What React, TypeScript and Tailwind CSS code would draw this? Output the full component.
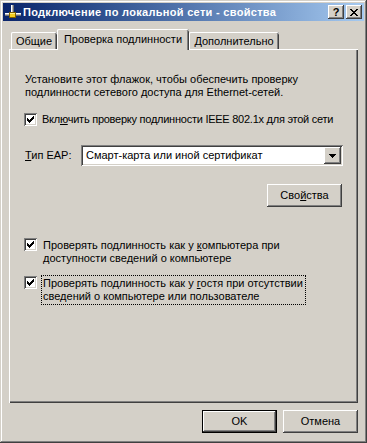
import React from 'react';

const raised =
  'shadow-[inset_-1px_-1px_#404040,inset_1px_1px_#ffffff,inset_-2px_-2px_#808080,inset_2px_2px_#d4d0c8]';
const sunken =
  'shadow-[inset_1px_1px_#808080,inset_-1px_-1px_#ffffff,inset_2px_2px_#404040,inset_-2px_-2px_#d4d0c8]';

function CheckBox() {
  return (
    <div className={`w-[13px] h-[13px] bg-white shrink-0 flex items-center justify-center ${sunken}`}>
      <svg width="7" height="7" viewBox="0 0 7 7" shapeRendering="crispEdges">
        <path
          d="M6 0h1v1H6z M5 1h2v1H5z M0 2h1v1H0z M4 2h3v1H4z M0 3h2v1H0z M3 3h3v1H3z M0 4h5v1H0z M1 5h3v1H1z M2 6h1v1H2z"
          fill="#000"
        />
      </svg>
    </div>
  );
}

function NetIcon() {
  return (
    <svg width="16" height="16" viewBox="0 0 16 16" shapeRendering="crispEdges">
      <rect x="6" y="1" width="3" height="8" fill="#b8b8b8" />
      <rect x="6" y="1" width="1" height="8" fill="#ffffff" />
      <rect x="8" y="1" width="1" height="8" fill="#707070" />
      <rect x="0" y="9" width="16" height="3" fill="#b8b8b8" />
      <rect x="0" y="9" width="16" height="1" fill="#ffffff" />
      <rect x="0" y="11" width="16" height="1" fill="#707070" />
      <rect x="4" y="8" width="7" height="6" fill="#806000" />
      <rect x="5" y="9" width="5" height="4" fill="#f8d020" />
      <rect x="5" y="9" width="5" height="1" fill="#fff080" />
    </svg>
  );
}

function TitleButton({ children }: { children: React.ReactNode }) {
  return (
    <div className={`w-[16px] h-[14px] bg-[#d4d0c8] flex items-center justify-center ${raised}`}>
      {children}
    </div>
  );
}

function Button({ label, isDefault }: { label: React.ReactNode; isDefault?: boolean }) {
  return isDefault ? (
    <div className="w-[75px] h-[23px] border border-black bg-[#d4d0c8]">
      <div className={`w-full h-full flex items-center justify-center ${raised}`}>{label}</div>
    </div>
  ) : (
    <div className={`w-[75px] h-[23px] bg-[#d4d0c8] flex items-center justify-center ${raised}`}>{label}</div>
  );
}

export default function App() {
  return (
    <div
      className={`w-[367px] h-[443px] bg-[#d4d0c8] p-[3px] flex flex-col text-[11px] leading-[13px] text-black font-['Liberation_Sans',Arial,sans-serif] shadow-[inset_-1px_-1px_#404040,inset_1px_1px_#d4d0c8,inset_-2px_-2px_#808080,inset_2px_2px_#ffffff]`}
    >
      {/* title bar */}
      <div className="h-[18px] flex items-center bg-gradient-to-r from-[#0a246a] to-[#a6caf0] pl-[2px] pr-[2px]">
        <NetIcon />
        <div className="ml-[2px] text-white font-bold text-[11px] tracking-[0.3px] flex-1 whitespace-nowrap">
          Подключение по локальной сети - свойства
        </div>
        <div className="flex gap-[2px]">
          <TitleButton>
            <span className="font-bold text-[11px] leading-[11px] mt-[1px]">?</span>
          </TitleButton>
          <TitleButton>
            <svg width="8" height="7" viewBox="0 0 8 7" shapeRendering="crispEdges">
              <path
                d="M0 0h2v1H0z M6 0h2v1H6z M1 1h2v1H1z M5 1h2v1H5z M2 2h4v1H2z M3 3h2v1H3z M2 4h4v1H2z M1 5h2v1H1z M5 5h2v1H5z M0 6h2v1H0z M6 6h2v1H6z"
                fill="#000"
              />
            </svg>
          </TitleButton>
        </div>
      </div>

      {/* body */}
      <div className="flex flex-col px-[6px] pt-[8px]">
        {/* tabs */}
        <div className="flex items-end h-[20px]">
          <div className="ml-[2px] w-[46px] h-[17px] rounded-t-[2px] flex items-center justify-center pt-[1px] shadow-[inset_1px_0_#ffffff,inset_0_1px_#ffffff,inset_-1px_0_#404040,inset_-2px_0_#808080]">
            Общие
          </div>
          <div className="relative z-10 w-[132px] h-[21px] -mb-[1px] bg-[#d4d0c8] rounded-t-[2px] flex items-start justify-center pt-[4px] shadow-[inset_1px_0_#ffffff,inset_0_1px_#ffffff,inset_-1px_0_#404040,inset_-2px_0_#808080]">
            Проверка подлинности
          </div>
          <div className="w-[90px] h-[17px] rounded-t-[2px] flex items-center justify-center pt-[1px] shadow-[inset_1px_0_#ffffff,inset_0_1px_#ffffff,inset_-1px_0_#404040,inset_-2px_0_#808080]">
            Дополнительно
          </div>
        </div>

        {/* panel */}
        <div className="w-[349px] h-[354px] pl-[15px] pr-[15px] pt-[24px] flex flex-col shadow-[inset_1px_1px_#ffffff,inset_-1px_-1px_#404040,inset_-2px_-2px_#808080]">
          <p className="pl-[1px]">
            Установите этот флажок, чтобы обеспечить проверку
            <br />
            подлинности сетевого доступа для Ethernet-сетей.
          </p>

          <div className="mt-[14px] flex items-center gap-[5px]">
            <CheckBox />
            <span className="whitespace-nowrap tracking-[-0.25px]">
              Вкл<span className="underline">ю</span>чить проверку подлинности IEEE 802.1x для этой сети
            </span>
          </div>

          <div className="mt-[19px] flex items-center">
            <div className="w-[57px] pl-[1px]">
              <span className="underline">Т</span>ип EAP:
            </div>
            <div className={`w-[262px] h-[21px] bg-white flex items-center p-[2px] ${sunken}`}>
              <div className="flex-1 pl-[3px]">Смарт-карта или иной сертификат</div>
              <div className={`w-[17px] h-[17px] bg-[#d4d0c8] flex items-center justify-center ${raised}`}>
                <svg width="7" height="4" viewBox="0 0 7 4" shapeRendering="crispEdges">
                  <path d="M0 0h7v1H0z M1 1h5v1H1z M2 2h3v1H2z M3 3h1v1H3z" fill="#000" />
                </svg>
              </div>
            </div>
          </div>

          <div className="mt-[18px] flex justify-end pr-[1px]">
            <Button
              label={
                <span>
                  Сво<span className="underline">й</span>ства
                </span>
              }
            />
          </div>

          <div className="mt-[30px] flex items-start gap-[4px]">
            <div className="mt-[1px]">
              <CheckBox />
            </div>
            <div className="border border-transparent py-[1px] pl-[1px] pr-[1px]">
              Проверять подлинность как у <span className="underline">к</span>омпьютера при
              <br />
              доступности сведений о компьютере
            </div>
          </div>

          <div className="mt-[8px] flex items-start gap-[4px]">
            <div className="mt-[1px]">
              <CheckBox />
            </div>
            <div className="border border-dotted border-black py-[1px] pl-[1px] pr-[2px]">
              Проверять подлинность как у <span className="underline">г</span>остя при отсутствии
              <br />
              сведений о компьютере или пользователе
            </div>
          </div>
        </div>

        {/* dialog buttons */}
        <div className="mt-[7px] flex justify-end gap-[6px]">
          <Button label="OK" isDefault />
          <Button label="Отмена" />
        </div>
      </div>
    </div>
  );
}
